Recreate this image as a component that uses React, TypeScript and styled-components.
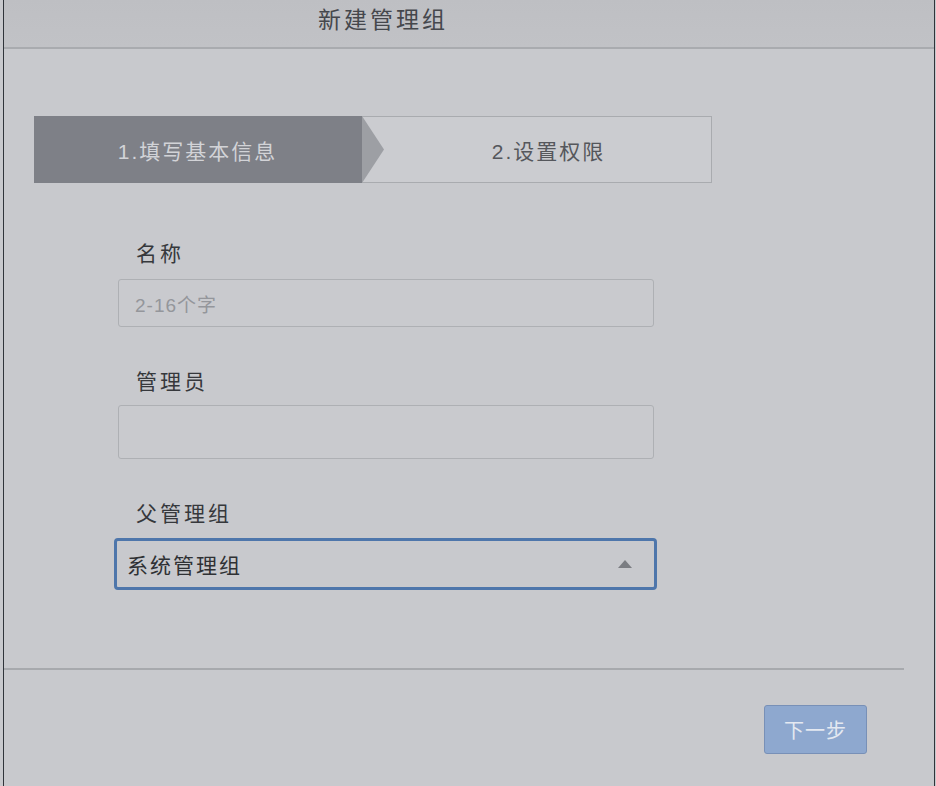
import React from 'react';
import styled, { createGlobalStyle } from 'styled-components';

const GlobalStyle = createGlobalStyle`
  html, body {
    margin: 0;
    padding: 0;
    background: #c8c9cd;
  }
  body {
    font-family: "Liberation Sans", "Noto Sans CJK SC", sans-serif;
  }
`;

const Page = styled.div`
  width: 936px;
  height: 786px;
  padding-left: 3px;
  box-sizing: border-box;
  background: #c8c9cd;
`;

const Dialog = styled.div`
  width: 932px;
  height: 786px;
  box-sizing: border-box;
  border-left: 1px solid #30343a;
  border-right: 1px solid #30343a;
  background: #c8c9cd;
  display: flex;
  flex-direction: column;
`;

const Header = styled.div`
  height: 49px;
  box-sizing: border-box;
  padding-left: 314px;
  display: flex;
  align-items: center;
  background: linear-gradient(#bebfc3, #c1c2c6);
  border-bottom: 2px solid #a9abaf;
`;

const Title = styled.h1`
  margin: 0;
  margin-top: -12px;
  font-size: 23px;
  font-weight: normal;
  letter-spacing: 3px;
  color: #45474c;
`;

const Body = styled.div`
  padding: 67px 0 0 30px;
  display: flex;
  flex-direction: column;
`;

const Steps = styled.div`
  width: 678px;
  height: 67px;
  display: flex;
`;

const Step = styled.div<{ $active?: boolean }>`
  position: relative;
  box-sizing: border-box;
  display: flex;
  align-items: center;
  justify-content: center;
  font-size: 21px;
  letter-spacing: 2px;
  width: ${p => (p.$active ? '328px' : '350px')};
  background: ${p => (p.$active ? '#7e8087' : '#cbccd0')};
  color: ${p => (p.$active ? '#d2d3d7' : '#55575c')};
  border: 1px solid ${p => (p.$active ? '#7e8087' : '#a9abaf')};
  border-left: none;
  padding-left: ${p => (p.$active ? '0' : '24px')};
`;

const Arrow = styled.svg`
  position: absolute;
  left: 0;
  top: -1px;
`;

const Form = styled.div`
  padding: 59px 0 0 114px;
  display: flex;
  flex-direction: column;
`;

const Label = styled.div<{ $gap: number }>`
  margin-left: 18px;
  line-height: 24px;
  font-size: 21px;
  letter-spacing: 3px;
  color: #36383c;
  margin-bottom: ${p => p.$gap}px;
`;

const Input = styled.div<{ $h: number }>`
  width: 536px;
  height: ${p => p.$h}px;
  box-sizing: border-box;
  border: 1px solid #aeb0b4;
  border-radius: 3px;
  background: #c9cace;
  display: flex;
  align-items: center;
  padding-left: 16px;
  font-size: 19px;
  letter-spacing: 1px;
  color: #94969b;
  margin-bottom: 43px;
`;

const Select = styled.div`
  width: 543px;
  height: 52px;
  margin-left: -4px;
  box-sizing: border-box;
  border: 3px solid #4e76ab;
  border-radius: 4px;
  display: flex;
  align-items: center;
  justify-content: space-between;
  padding: 0 22px 0 10px;
  font-size: 21px;
  letter-spacing: 2px;
  color: #2f3134;
`;

const Caret = styled.span`
  width: 0;
  height: 0;
  border-left: 7px solid transparent;
  border-right: 7px solid transparent;
  border-bottom: 8px solid #7b7d82;
`;

const Divider = styled.div`
  margin-top: 78px;
  width: 900px;
  height: 2px;
  background: #a7a9ad;
`;

const Footer = styled.div`
  width: 863px;
  display: flex;
  justify-content: flex-end;
  padding-top: 35px;
`;

const Button = styled.button`
  width: 103px;
  height: 49px;
  border: 1px solid #7890b7;
  border-radius: 3px;
  background: #8ea8cf;
  color: #e4e9f1;
  font-family: "Liberation Sans", "Noto Sans CJK SC", sans-serif;
  font-size: 20px;
  letter-spacing: 1px;
`;

export default function App() {
  return (
    <>
      <GlobalStyle />
      <Page>
        <Dialog>
          <Header>
            <Title>新建管理组</Title>
          </Header>
          <Body>
            <Steps>
              <Step $active>1.填写基本信息</Step>
              <Step>
                <Arrow width="23" height="67" viewBox="0 0 23 67">
                  <polygon points="0,0 22,33.5 0,67" fill="#9d9fa4" />
                </Arrow>
                2.设置权限
              </Step>
            </Steps>
          </Body>
          <Form>
            <Label $gap={13}>名称</Label>
            <Input $h={48}>2-16个字</Input>
            <Label $gap={11}>管理员</Label>
            <Input $h={54} />
            <Label $gap={12}>父管理组</Label>
            <Select>
              系统管理组
              <Caret />
            </Select>
          </Form>
          <Divider />
          <Footer>
            <Button>下一步</Button>
          </Footer>
        </Dialog>
      </Page>
    </>
  );
}
